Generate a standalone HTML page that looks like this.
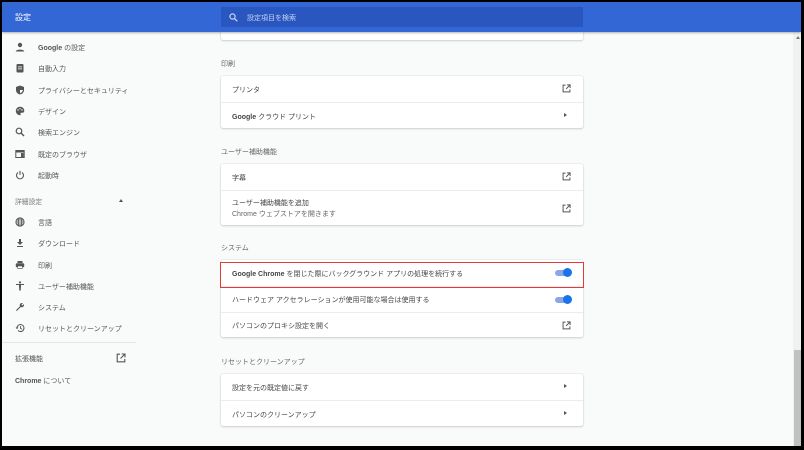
<!DOCTYPE html>
<html><head><meta charset="utf-8"><style>
*{margin:0;padding:0;box-sizing:border-box}
body{width:804px;height:450px;background:#000;font-family:"Liberation Sans","Noto Sans CJK JP",sans-serif;font-size:7px;color:#444;overflow:hidden;position:relative}
#frame{position:absolute;left:2px;top:2px;width:799px;height:444px;background:#f9fafa;overflow:hidden}
#hdr{position:absolute;left:0;top:0;width:799px;height:30px;background:#3367d6;box-shadow:0 1px 2px rgba(0,0,0,.3);z-index:5}
#hdr .t{position:absolute;left:13px;top:10px;color:#fff;font-size:8px}
#srch{position:absolute;left:219px;top:5px;width:362px;height:20px;background:#2a56c0;color:#c6d3f3}
#srch span{position:absolute;left:26px;top:6px;font-size:7px}
.ab{position:absolute}
.nav{position:absolute;left:36px;color:#555}
.ic{position:absolute;left:13px;width:10px;height:10px}
.card{position:absolute;left:219px;width:362px;background:#fff;border-radius:2px;box-shadow:0 0 1px rgba(0,0,0,.25),0 1px 2px rgba(0,0,0,.15)}
.row{position:absolute;left:0;width:100%;border-top:1px solid #ececec}
.row span{position:absolute;left:11px}
.lbl{position:absolute;left:219px;color:#666}
.arr{position:absolute;right:16px;width:0;height:0;border-left:3px solid #555;border-top:2.5px solid transparent;border-bottom:2.5px solid transparent}
.ext{position:absolute;right:12px;width:9px;height:9px}
.tog{position:absolute;right:12px;width:16px;height:6px;border-radius:3px;background:#8aa6e6}
.tog::after{content:"";position:absolute;right:-1px;top:-2px;width:9px;height:9px;border-radius:50%;background:#1a73e8}
b{font-weight:600}
</style></head><body>
<div id="frame">
<div id="hdr"><div class="t">設定</div>
<div id="srch"><svg class="ab" style="left:8px;top:6px" width="9" height="9" viewBox="0 0 9 9"><circle cx="3.5" cy="3.5" r="2.6" fill="none" stroke="#c6d3f3" stroke-width="1.2"/><path d="M5.5 5.5L8.3 8.3" stroke="#c6d3f3" stroke-width="1.3"/></svg><span>設定項目を検索</span></div></div>

<svg class="ic" style="top:40px" viewBox="0 0 10 10"><circle cx="5" cy="3" r="2.2" fill="#555"/><path d="M0.8 9.5c0-2.5 8.4-2.5 8.4 0z" fill="#555"/></svg><div class="nav" style="top:41px"><b>Google</b> の設定</div>
<svg class="ic" style="top:61px" viewBox="0 0 10 10"><rect x="1.5" y="1" width="7" height="8.5" rx="1" fill="#555"/><rect x="3" y="3.5" width="4" height="0.8" fill="#fff"/><rect x="3" y="5.5" width="4" height="0.8" fill="#fff"/></svg><div class="nav" style="top:62px">自動入力</div>
<svg class="ic" style="top:83px" viewBox="0 0 10 10"><path d="M5 0.5L1 2v3c0 2.5 1.8 4 4 4.5 2.2-.5 4-2 4-4.5V2z" fill="#555"/><path d="M5 1.8V8.2C6.5 7.6 7.8 6.6 7.8 5H5z" fill="#fff"/></svg><div class="nav" style="top:84px">プライバシーとセキュリティ</div>
<svg class="ic" style="top:104px" viewBox="0 0 10 10"><path d="M5 .8a4.2 4.2 0 100 8.4c.7 0 .9-.6.6-1.1-.4-.6 0-1.3.7-1.3h1a2.1 2.1 0 002-2C9.3 2.5 7.4.8 5 .8z" fill="#555"/><circle cx="3" cy="4" r=".7" fill="#fff"/><circle cx="5" cy="2.8" r=".7" fill="#fff"/><circle cx="7" cy="4" r=".7" fill="#fff"/></svg><div class="nav" style="top:105px">デザイン</div>
<svg class="ic" style="top:125px" viewBox="0 0 10 10"><circle cx="4" cy="4" r="2.8" fill="none" stroke="#555" stroke-width="1.2"/><path d="M6 6L9 9" stroke="#555" stroke-width="1.4"/></svg><div class="nav" style="top:126px">検索エンジン</div>
<svg class="ic" style="top:147px" viewBox="0 0 10 10"><rect x="0.8" y="1.5" width="8.4" height="7" fill="none" stroke="#555" stroke-width="1"/><rect x="0.8" y="1.5" width="8.4" height="2" fill="#555"/><rect x="6" y="4" width="2.7" height="4" fill="#555"/></svg><div class="nav" style="top:148px">既定のブラウザ</div>
<svg class="ic" style="top:168px" viewBox="0 0 10 10"><path d="M3 2.5a3.5 3.5 0 104 0" fill="none" stroke="#555" stroke-width="1.1"/><path d="M5 .8v4" stroke="#555" stroke-width="1.1"/></svg><div class="nav" style="top:169px">起動時</div>
<div class="nav" style="top:194px;left:13px;color:#777;font-size:6.8px">詳細設定</div>
<div class="ab" style="left:117px;top:197px;border-bottom:3px solid #555;border-left:2.5px solid transparent;border-right:2.5px solid transparent"></div>
<svg class="ic" style="top:215px" viewBox="0 0 10 10"><circle cx="5" cy="5" r="4.1" fill="none" stroke="#555" stroke-width="1"/><ellipse cx="5" cy="5" rx="1.7" ry="4.1" fill="none" stroke="#555" stroke-width=".9"/><path d="M1 5h8M1.6 3h6.8M1.6 7h6.8" stroke="#555" stroke-width=".8"/></svg><div class="nav" style="top:216px">言語</div>
<svg class="ic" style="top:236px" viewBox="0 0 10 10"><path d="M4 1h2v3h2L5 7 2 4h2z" fill="#555"/><rect x="2" y="8" width="6" height="1" fill="#555"/></svg><div class="nav" style="top:237px">ダウンロード</div>
<svg class="ic" style="top:258px" viewBox="0 0 10 10"><rect x="2.5" y="1" width="5" height="2" fill="#555"/><rect x="0.8" y="3.3" width="8.4" height="4" rx="1" fill="#555"/><rect x="2.5" y="6" width="5" height="3" fill="#555"/><rect x="3" y="6.3" width="4" height="2" fill="#fff"/></svg><div class="nav" style="top:259px">印刷</div>
<svg class="ic" style="top:279px" viewBox="0 0 10 10"><circle cx="5" cy="1.4" r="1.1" fill="#555"/><path d="M1 3h8v1H6v5.5H5.2V6.5h-.4v3H4V4H1z" fill="#555"/></svg><div class="nav" style="top:280px">ユーザー補助機能</div>
<svg class="ic" style="top:300px" viewBox="0 0 10 10"><path d="M1 8.2L5 4.2a2.2 2.2 0 012.9-3L6.4 2.7l.9.9 1.5-1.5a2.2 2.2 0 01-3 2.9L1.8 9z" fill="#555"/></svg><div class="nav" style="top:301px">システム</div>
<svg class="ic" style="top:321px" viewBox="0 0 10 10"><path d="M2 5a3.5 3.5 0 111 2.5" fill="none" stroke="#555" stroke-width="1"/><path d="M0.6 4.5h2.8L2 6.3z" fill="#555"/><path d="M5.5 3v2.3l1.5 1" fill="none" stroke="#555" stroke-width=".9"/></svg><div class="nav" style="top:322px">リセットとクリーンアップ</div>
<div class="ab" style="left:0;top:340px;width:134px;height:1px;background:#e4e4e4"></div>
<div class="nav" style="top:352px;left:13px">拡張機能</div>
<svg class="ab" style="left:114px;top:351px" width="10" height="10" viewBox="0 0 10 10"><path d="M4 1.2H1.2v7.6h7.6V6" fill="none" stroke="#555" stroke-width="1.1"/><path d="M5.6 1h3.4v3.4M9 1L4.5 5.5" fill="none" stroke="#555" stroke-width="1.1"/></svg>
<div class="nav" style="top:374px;left:13px"><b>Chrome</b> について</div>

<div class="card" style="top:-10px;height:48px"></div>
<div class="lbl" style="top:57px">印刷</div>
<div class="card" style="top:74px;height:52px">
<div class="row" style="top:0;border:0;height:26px"><span style="top:9px">プリンタ</span><svg class="ext" style="top:8px" viewBox="0 0 10 10"><path d="M4 1.2H1.2v7.6h7.6V6" fill="none" stroke="#555" stroke-width="1.1"/><path d="M5.6 1h3.4v3.4M9 1L4.5 5.5" fill="none" stroke="#555" stroke-width="1.1"/></svg></div>
<div class="row" style="top:26px;height:26px"><span style="top:9px"><b>Google</b> クラウド プリント</span><div class="arr" style="top:10px"></div></div>
</div>
<div class="lbl" style="top:145px">ユーザー補助機能</div>
<div class="card" style="top:162px;height:61px">
<div class="row" style="top:0;border:0;height:26px"><span style="top:9px">字幕</span><svg class="ext" style="top:8px" viewBox="0 0 10 10"><path d="M4 1.2H1.2v7.6h7.6V6" fill="none" stroke="#555" stroke-width="1.1"/><path d="M5.6 1h3.4v3.4M9 1L4.5 5.5" fill="none" stroke="#555" stroke-width="1.1"/></svg></div>
<div class="row" style="top:26px;height:35px"><span style="top:7px">ユーザー補助機能を追加</span><span style="top:18px;color:#666">Chrome ウェブストアを開きます</span><svg class="ext" style="top:13px" viewBox="0 0 10 10"><path d="M4 1.2H1.2v7.6h7.6V6" fill="none" stroke="#555" stroke-width="1.1"/><path d="M5.6 1h3.4v3.4M9 1L4.5 5.5" fill="none" stroke="#555" stroke-width="1.1"/></svg></div>
</div>
<div class="lbl" style="top:241px">システム</div>
<div class="card" style="top:258px;height:77px">
<div class="row" style="top:0;border:0;height:26px"><span style="top:9px"><b>Google Chrome</b> を閉じた際にバックグラウンド アプリの処理を続行する</span><div class="tog" style="top:10px"></div></div>
<div class="row" style="top:26px;height:26px"><span style="top:8px">ハードウェア アクセラレーションが使用可能な場合は使用する</span><div class="tog" style="top:10px"></div></div>
<div class="row" style="top:52px;height:25px"><span style="top:8px">パソコンのプロキシ設定を開く</span><svg class="ext" style="top:8px" viewBox="0 0 10 10"><path d="M4 1.2H1.2v7.6h7.6V6" fill="none" stroke="#555" stroke-width="1.1"/><path d="M5.6 1h3.4v3.4M9 1L4.5 5.5" fill="none" stroke="#555" stroke-width="1.1"/></svg></div>
</div>
<div class="ab" style="left:218px;top:260px;width:364px;height:26px;border:1.3px solid #e53935"></div>
<div class="lbl" style="top:355px">リセットとクリーンアップ</div>
<div class="card" style="top:372px;height:52px">
<div class="row" style="top:0;border:0;height:26px"><span style="top:9px">設定を元の既定値に戻す</span><div class="arr" style="top:10px"></div></div>
<div class="row" style="top:26px;height:26px"><span style="top:9px">パソコンのクリーンアップ</span><div class="arr" style="top:10px"></div></div>
</div>

<div class="ab" style="left:791px;top:30px;width:8px;height:414px;background:#f1f1f1"></div>
<div class="ab" style="left:792px;top:348px;width:7px;height:96px;background:#c1c1c1"></div>
<div class="ab" style="left:794px;top:34px;border-bottom:3px solid #777;border-left:2px solid transparent;border-right:2px solid transparent"></div>
</div>
</body></html>
